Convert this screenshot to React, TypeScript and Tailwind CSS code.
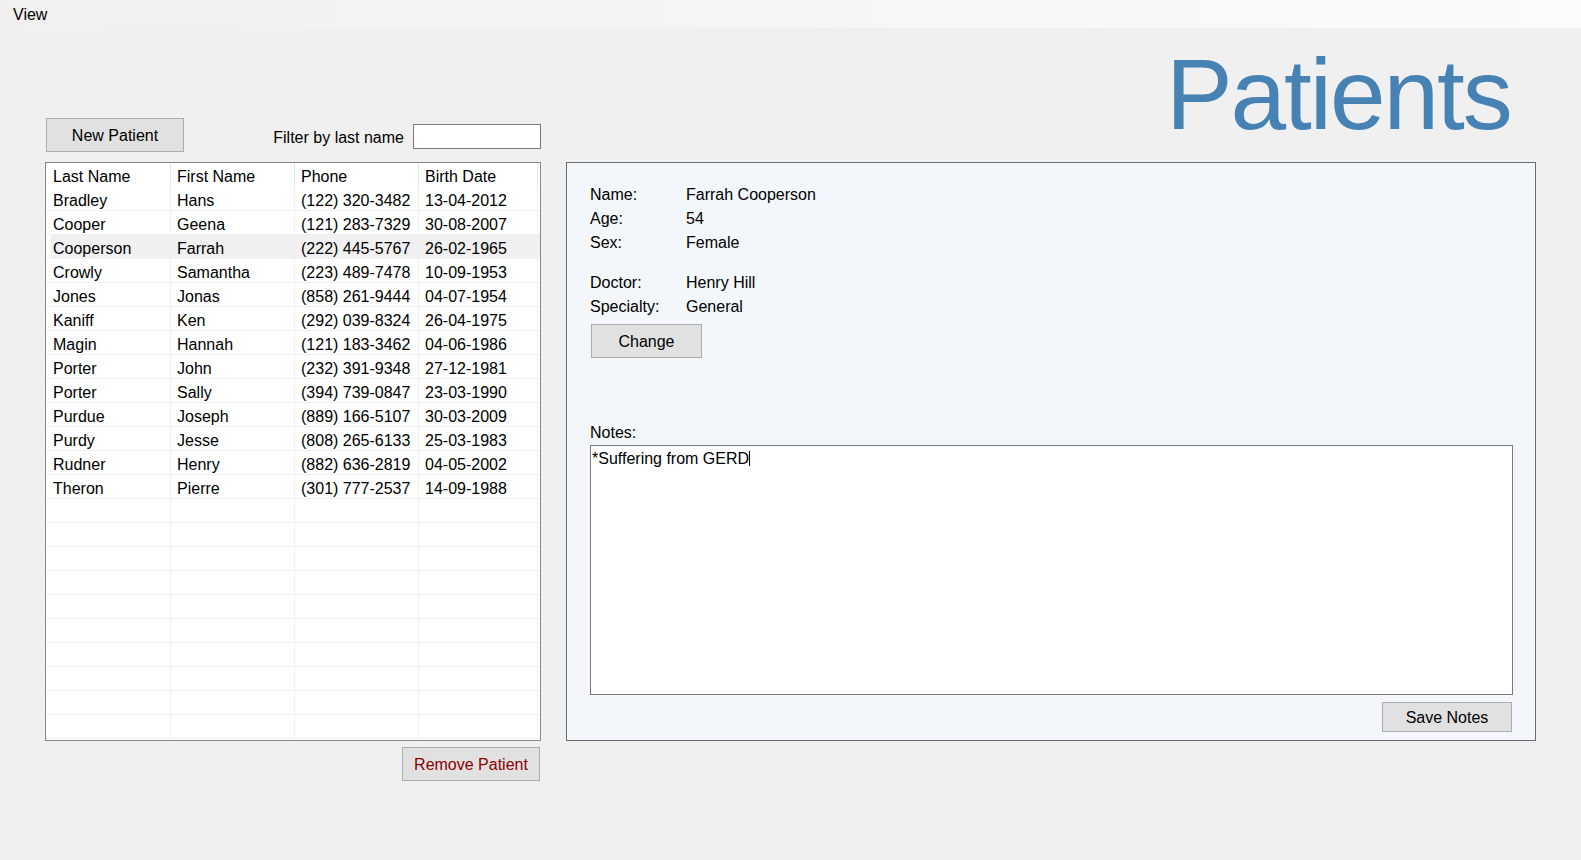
import React from "react";

type Patient = {
  last: string;
  first: string;
  phone: string;
  birth: string;
};

const patients: Patient[] = [
  { last: "Bradley", first: "Hans", phone: "(122) 320-3482", birth: "13-04-2012" },
  { last: "Cooper", first: "Geena", phone: "(121) 283-7329", birth: "30-08-2007" },
  { last: "Cooperson", first: "Farrah", phone: "(222) 445-5767", birth: "26-02-1965" },
  { last: "Crowly", first: "Samantha", phone: "(223) 489-7478", birth: "10-09-1953" },
  { last: "Jones", first: "Jonas", phone: "(858) 261-9444", birth: "04-07-1954" },
  { last: "Kaniff", first: "Ken", phone: "(292) 039-8324", birth: "26-04-1975" },
  { last: "Magin", first: "Hannah", phone: "(121) 183-3462", birth: "04-06-1986" },
  { last: "Porter", first: "John", phone: "(232) 391-9348", birth: "27-12-1981" },
  { last: "Porter", first: "Sally", phone: "(394) 739-0847", birth: "23-03-1990" },
  { last: "Purdue", first: "Joseph", phone: "(889) 166-5107", birth: "30-03-2009" },
  { last: "Purdy", first: "Jesse", phone: "(808) 265-6133", birth: "25-03-1983" },
  { last: "Rudner", first: "Henry", phone: "(882) 636-2819", birth: "04-05-2002" },
  { last: "Theron", first: "Pierre", phone: "(301) 777-2537", birth: "14-09-1988" },
];

const SELECTED = 2;
const EMPTY_ROWS = 10;

const cols = "grid grid-cols-[125px_124px_124px_119px]";
const cell = "border-r border-[#f0f0f0] pl-[6px] first:pl-[7px] pt-[3px] leading-[21px] whitespace-nowrap";
const btn = "bg-[#e1e1e1] border border-[#adadad] pt-[2px]";

function PatientTable() {
  return (
    <div className="h-[579px] border border-[#828790] bg-white overflow-hidden">
      {/* header */}
      <div className={`${cols} h-[24px]`}>
        {["Last Name", "First Name", "Phone", "Birth Date"].map((h) => (
          <div
            key={h}
            className="border-r border-[#e5e5e5] pl-[6px] first:pl-[7px] pt-[3px] leading-[21px]"
          >
            {h}
          </div>
        ))}
      </div>
      {patients.map((p, i) => (
        <div
          key={i}
          className={`${cols} h-[24px] border-b border-[#f0f0f0] ${
            i === SELECTED ? "bg-[linear-gradient(to_right,white_5px,#f0f0f0_5px)]" : ""
          }`}
        >
          <div className={cell}>{p.last}</div>
          <div className={cell}>{p.first}</div>
          <div className={cell}>{p.phone}</div>
          <div className={cell}>{p.birth}</div>
        </div>
      ))}
      {Array.from({ length: EMPTY_ROWS }).map((_, i) => (
        <div key={`e${i}`} className={`${cols} h-[24px] border-b border-[#f0f0f0]`}>
          <div className="border-r border-[#f0f0f0]" />
          <div className="border-r border-[#f0f0f0]" />
          <div className="border-r border-[#f0f0f0]" />
          <div className="border-r border-[#f0f0f0]" />
        </div>
      ))}
    </div>
  );
}

function DetailsPanel() {
  return (
    <div className="h-[579px] border border-[#6b6b6b] bg-[#f3f7fc] flex flex-col pt-[20px] pl-[23px] pr-[22px]">
      <div className="grid grid-cols-[96px_1fr] leading-[24px]">
        <div>Name:</div>
        <div>Farrah Cooperson</div>
        <div>Age:</div>
        <div>54</div>
        <div>Sex:</div>
        <div>Female</div>
      </div>
      <div className="grid grid-cols-[96px_1fr] leading-[24px] mt-[16px]">
        <div>Doctor:</div>
        <div>Henry Hill</div>
        <div>Specialty:</div>
        <div>General</div>
      </div>
      <button className={`${btn} mt-[5px] ml-[1px] w-[111px] h-[34px]`}>Change</button>
      <div className="mt-[62px] pt-[2px] leading-[22px]">Notes:</div>
      <div className="mt-[1px] h-[250px] bg-white border border-[#7a7a7a] pl-[1px] pt-[3px] leading-[19px]">
        *Suffering from GERD
        <span className="inline-block w-[1px] h-[15px] bg-black align-[-2px]" />
      </div>
      <button className={`${btn} mt-[7px] self-end mr-[1px] w-[130px] h-[30px]`}>Save Notes</button>
    </div>
  );
}

export default function App() {
  return (
    <div className="w-full h-[860px] bg-[#f0f0f0] text-[16px] text-black font-['Liberation_Sans',Arial,sans-serif] overflow-hidden">
      {/* menu strip */}
      <div className="h-[28px] bg-linear-to-r from-[#f0f0f0] to-[#fbfbfb] pl-[13px] pt-[3px] text-[16px] leading-[24px]">
        View
      </div>

      <div className="pl-[45px] grid grid-cols-[496px_970px] gap-x-[25px]">
        {/* top left: new patient + filter */}
        <div className="h-[134px] flex items-end justify-between">
          <button className={`${btn} mb-[10px] ml-[1px] w-[138px] h-[34px]`}>New Patient</button>
          <div className="mb-[12px] flex items-center gap-[9px]">
            <span className="pt-[4px]">Filter by last name</span>
            <div className="w-[128px] h-[25px] bg-white border border-[#7a7a7a]" />
          </div>
        </div>

        {/* top right: title */}
        <div className="h-[134px] pt-[16px] pl-[600px]">
          <h1 className="text-[100px] leading-[100px] tracking-[-2.1px] text-[#4682b4] whitespace-nowrap">
            Patients
          </h1>
        </div>

        <PatientTable />
        <DetailsPanel />

        <div className="flex justify-end">
          <button className={`${btn} mt-[6px] mr-[1px] w-[138px] h-[34px] text-[#8b0000]`}>
            Remove Patient
          </button>
        </div>
      </div>
    </div>
  );
}
